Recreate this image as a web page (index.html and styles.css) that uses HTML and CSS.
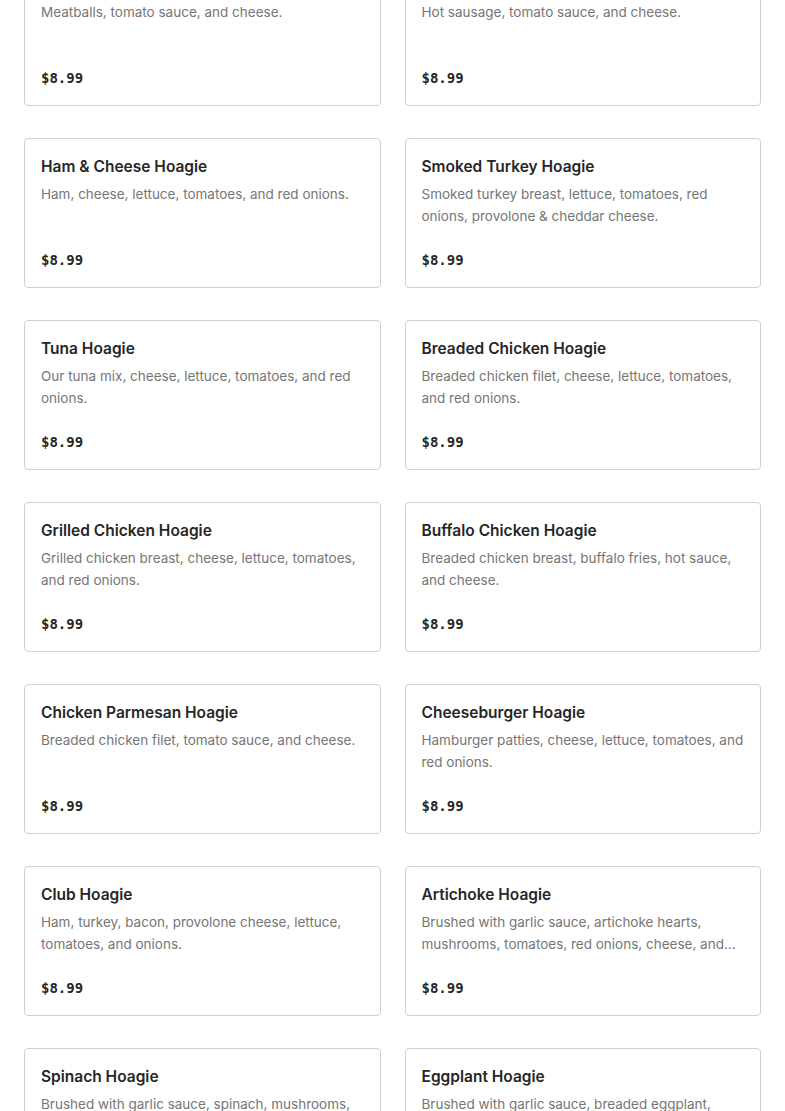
FILE: index.html
```html
<!DOCTYPE html>
<html lang="en">
<head>
<meta charset="utf-8">
<title>Hoagies</title>
<link rel="stylesheet" href="styles.css">
</head>
<body>
<main class="menu">
  <article class="card">
    <h3 class="card-title">Meatball Hoagie</h3>
    <p class="card-desc">Meatballs, tomato sauce, and cheese.</p>
    <span class="card-price">$8.99</span>
  </article>
  <article class="card">
    <h3 class="card-title">Hot Sausage Hoagie</h3>
    <p class="card-desc">Hot sausage, tomato sauce, and cheese.</p>
    <span class="card-price">$8.99</span>
  </article>
  <article class="card">
    <h3 class="card-title">Ham &amp; Cheese Hoagie</h3>
    <p class="card-desc">Ham, cheese, lettuce, tomatoes, and red onions.</p>
    <span class="card-price">$8.99</span>
  </article>
  <article class="card">
    <h3 class="card-title">Smoked Turkey Hoagie</h3>
    <p class="card-desc">Smoked turkey breast, lettuce, tomatoes, red onions, provolone &amp; cheddar cheese.</p>
    <span class="card-price">$8.99</span>
  </article>
  <article class="card">
    <h3 class="card-title">Tuna Hoagie</h3>
    <p class="card-desc">Our tuna mix, cheese, lettuce, tomatoes, and red onions.</p>
    <span class="card-price">$8.99</span>
  </article>
  <article class="card">
    <h3 class="card-title">Breaded Chicken Hoagie</h3>
    <p class="card-desc">Breaded chicken filet, cheese, lettuce, tomatoes, and red onions.</p>
    <span class="card-price">$8.99</span>
  </article>
  <article class="card">
    <h3 class="card-title">Grilled Chicken Hoagie</h3>
    <p class="card-desc">Grilled chicken breast, cheese, lettuce, tomatoes, and red onions.</p>
    <span class="card-price">$8.99</span>
  </article>
  <article class="card">
    <h3 class="card-title">Buffalo Chicken Hoagie</h3>
    <p class="card-desc">Breaded chicken breast, buffalo fries, hot sauce, and cheese.</p>
    <span class="card-price">$8.99</span>
  </article>
  <article class="card">
    <h3 class="card-title">Chicken Parmesan Hoagie</h3>
    <p class="card-desc">Breaded chicken filet, tomato sauce, and cheese.</p>
    <span class="card-price">$8.99</span>
  </article>
  <article class="card">
    <h3 class="card-title">Cheeseburger Hoagie</h3>
    <p class="card-desc">Hamburger patties, cheese, lettuce, tomatoes, and red onions.</p>
    <span class="card-price">$8.99</span>
  </article>
  <article class="card">
    <h3 class="card-title">Club Hoagie</h3>
    <p class="card-desc">Ham, turkey, bacon, provolone cheese, lettuce, tomatoes, and onions.</p>
    <span class="card-price">$8.99</span>
  </article>
  <article class="card">
    <h3 class="card-title">Artichoke Hoagie</h3>
    <p class="card-desc">Brushed with garlic sauce, artichoke hearts, mushrooms, tomatoes, red onions, cheese, and oregano.</p>
    <span class="card-price">$8.99</span>
  </article>
  <article class="card">
    <h3 class="card-title">Spinach Hoagie</h3>
    <p class="card-desc">Brushed with garlic sauce, spinach, mushrooms, tomatoes, red onions, and cheese.</p>
    <span class="card-price">$8.99</span>
  </article>
  <article class="card">
    <h3 class="card-title">Eggplant Hoagie</h3>
    <p class="card-desc">Brushed with garlic sauce, breaded eggplant, tomato sauce, and cheese.</p>
    <span class="card-price">$8.99</span>
  </article>
</main>
</body>
</html>
```
FILE: styles.css
```css
html, body {
  margin: 0;
  padding: 0;
  background: #ffffff;
}

body {
  font-family: "Inter", "Liberation Sans", sans-serif;
  color: #2d2d2d;
  overflow: hidden;
}

.menu {
  display: grid;
  grid-template-columns: 1fr 1fr;
  column-gap: 24px;
  row-gap: 32px;
  padding: 0 24px 40px;
  margin-top: -44px;
}

.card {
  display: flex;
  flex-direction: column;
  border: 1px solid #cfcfcf;
  border-radius: 4px;
  padding: 16px 16px 15px;
  height: 150px;
  box-sizing: border-box;
}

.card-title {
  margin: 0 0 4px;
  font-size: 15.5px;
  line-height: 24px;
  font-weight: 600;
  color: #262626;
  white-space: nowrap;
  overflow: hidden;
  text-overflow: ellipsis;
}

.card-desc {
  margin: 0;
  font-size: 13.5px;
  line-height: 22px;
  color: #767676;
  height: 44px;
  display: -webkit-box;
  -webkit-line-clamp: 2;
  -webkit-box-orient: vertical;
  overflow: hidden;
}

.card-price {
  margin-top: auto;
  font-family: "DejaVu Sans Mono", "Liberation Mono", monospace;
  font-weight: 700;
  font-size: 14px;
  line-height: 24px;
  color: #262626;
}
```
